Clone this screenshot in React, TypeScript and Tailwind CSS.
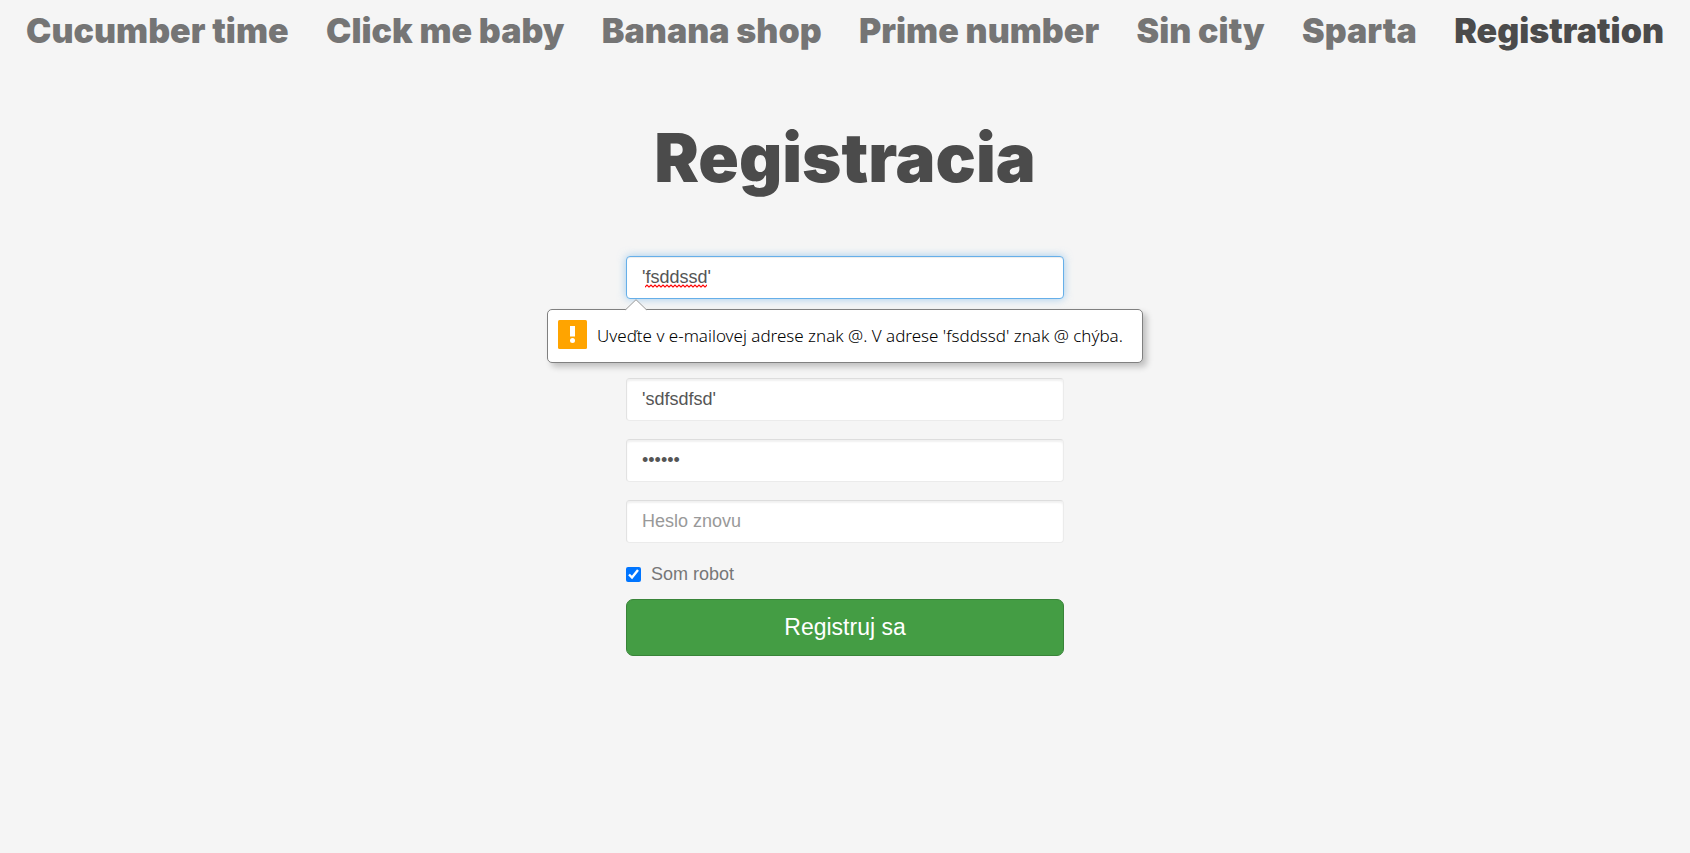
import { useState } from 'react';

const links = [
  'Cucumber time',
  'Click me baby',
  'Banana shop',
  'Prime number',
  'Sin city',
  'Sparta',
  'Registration',
];

const fieldBase =
  'block w-full h-[43px] rounded-[4px] border bg-white px-[15px] text-[18px] leading-6 text-[#555555] outline-none placeholder:text-[#999999]';
const plainField =
  'border-[#ebebeb] border-t-[#dddddd] border-l-[#e2e2e2] shadow-[inset_0_2px_2px_rgba(0,0,0,0.06)]';
const activeField =
  'border-[#66afe9] shadow-[inset_0_1px_1px_rgba(0,0,0,0.075),0_0_9px_rgba(102,175,233,0.6)]';

function Nav() {
  return (
    <nav className="px-[26px] pt-[11px]">
      <ul className="flex items-center justify-between font-[Inter,sans-serif] text-[34px] leading-10 font-black whitespace-nowrap">
        {links.map((label) => (
          <li key={label}>
            <a
              href="#"
              aria-current={label === 'Registration' ? 'page' : undefined}
              className={label === 'Registration' ? 'text-[#4b4b4b]' : 'text-[#757575]'}
            >
              {label}
            </a>
          </li>
        ))}
      </ul>
    </nav>
  );
}

function Warning() {
  return (
    <div
      role="alert"
      className="absolute top-[53px] left-1/2 z-10 flex h-[54px] w-[596px] -translate-x-1/2 items-center rounded-[5px] border border-[#808080] bg-white pl-[10px] shadow-[4px_4px_6px_rgba(0,0,0,0.22)]"
    >
      <svg className="absolute -top-[11px] left-[77px]" width="22" height="12" viewBox="0 0 22 12" aria-hidden="true">
        <path d="M0.5 11.5V11L11 0.7L21.5 11V12H0.5Z" fill="#ffffff" />
        <path d="M0.5 10.8L11 0.7L21.5 10.8" fill="none" stroke="#9a9a9a" />
      </svg>
      <svg className="mb-1 shrink-0" width="29" height="29" viewBox="0 0 29 29" aria-hidden="true">
        <rect width="29" height="29" rx="1.5" fill="#ffa400" />
        <rect x="12" y="6" width="5" height="10.5" fill="#ffffff" />
        <circle cx="14.5" cy="20.5" r="2.5" fill="#ffffff" />
      </svg>
      <p className="ml-[10px] font-['Noto_Sans',sans-serif] text-[17px] leading-6 font-light whitespace-nowrap text-black">
        Uveďte v e-mailovej adrese znak @. V adrese 'fsddssd' znak @ chýba.
      </p>
    </div>
  );
}

export default function App() {
  const [email, setEmail] = useState("'fsddssd'");
  const [name, setName] = useState("'sdfsdfsd'");
  const [password, setPassword] = useState('xxxxxx');
  const [repeat, setRepeat] = useState('');
  const [robot, setRobot] = useState(true);

  return (
    <div className="min-h-screen bg-[#f5f5f5] font-['Liberation_Sans',Arial,sans-serif]">
      <Nav />
      <main className="mx-auto w-full max-w-[438px]">
        <h1 className="mt-[67px] flex justify-center font-[Inter,sans-serif] text-[67px] leading-[80px] font-black text-[#4b4b4b]">
          Registracia
        </h1>
        <form className="mt-[58px]" onSubmit={(e) => e.preventDefault()}>
          <div className="relative mb-[79px]">
            <input
              type="text"
              inputMode="email"
              aria-label="E-mail"
              spellCheck={false}
              value={email}
              onChange={(e) => setEmail(e.target.value)}
              className={`${fieldBase} ${activeField}`}
            />
            <svg className="pointer-events-none absolute top-[28px] left-[19px]" width="62" height="4" aria-hidden="true">
              <defs>
                <pattern id="wave" width="4" height="4" patternUnits="userSpaceOnUse">
                  <path d="M-1 3.5L0 3L2 1L4 3L5 3.5" fill="none" stroke="#ff0000" strokeWidth="1.2" />
                </pattern>
              </defs>
              <rect width="62" height="4" fill="url(#wave)" />
            </svg>
            <Warning />
          </div>
          <div className="flex flex-col gap-[18px]">
            <input
              type="text"
              aria-label="Meno"
              spellCheck={false}
              value={name}
              onChange={(e) => setName(e.target.value)}
              className={`${fieldBase} ${plainField}`}
            />
            <input
              type="password"
              aria-label="Heslo"
              value={password}
              onChange={(e) => setPassword(e.target.value)}
              className={`${fieldBase} ${plainField}`}
            />
            <input
              type="password"
              aria-label="Heslo znovu"
              placeholder="Heslo znovu"
              value={repeat}
              onChange={(e) => setRepeat(e.target.value)}
              className={`${fieldBase} ${plainField}`}
            />
          </div>
          <label className="mt-[19px] flex w-fit items-center gap-[10px] text-[18px] leading-6 text-[#777777]">
            <input
              type="checkbox"
              checked={robot}
              onChange={(e) => setRobot(e.target.checked)}
              className="size-[15px] accent-[#0075ff]"
            />
            Som robot
          </label>
          <button
            type="submit"
            className="mt-[13px] h-[57px] w-full rounded-[7px] border border-[#398439] bg-[#449d44] pb-[2px] text-[23px] leading-8 text-white"
          >
            Registruj sa
          </button>
        </form>
      </main>
    </div>
  );
}
